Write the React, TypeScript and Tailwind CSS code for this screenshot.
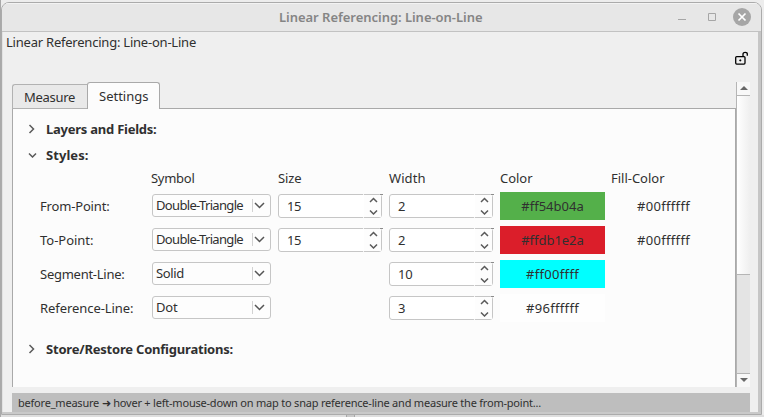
import { useLayoutEffect, useRef, useState } from 'react';

type LabelProps = { text: string; width: number; className?: string };

/** Text run whose tracking is adjusted so that it spans a given width. */
function Label({ text, width, className = '' }: LabelProps) {
  const ref = useRef<HTMLSpanElement>(null);
  const [tracking, setTracking] = useState(0);
  useLayoutEffect(() => {
    if (ref.current) {
      const natural = ref.current.getBoundingClientRect().width - tracking * text.length;
      setTracking((width - natural) / text.length);
    }
  }, [text, width]);
  return (
    <span ref={ref} className={`block w-max whitespace-pre leading-4 ${className}`} style={{ letterSpacing: `${tracking}px` }}>
      {text}
    </span>
  );
}

function Chevron({ dir, className = '' }: { dir: 'up' | 'down' | 'right'; className?: string }) {
  const paths = { up: 'M1 5 4.5 1.5 8 5', down: 'M1 1.5 4.5 5 8 1.5', right: 'M1.5 1 5.5 5 1.5 9' };
  return (
    <svg
      className={`block shrink-0 ${className}`}
      width={dir === 'right' ? 8 : 9}
      height={dir === 'right' ? 10 : 6}
      fill="none"
      stroke="#5a5a5a"
      strokeWidth="1.5"
    >
      <path d={paths[dir]} />
    </svg>
  );
}

function Combo({ text, width }: { text: string; width: number }) {
  return (
    <div className="mt-[2px] flex h-[23px] w-[119px] items-start rounded-[3px] border border-[#c6c6c6] bg-[#fdfdfd] pl-[3px]">
      <Label text={text} width={width} className="mt-[2px]" />
      <div className="ml-auto mt-[4px] flex h-[13px] w-[18px] items-center border-l border-[#d2d2d2] pl-px">
        <svg width="11" height="7" className="block" fill="none" stroke="#555" strokeWidth="1.5">
          <path d="M1 1 5.5 5.5 10 1" />
        </svg>
      </div>
    </div>
  );
}

function Spin({ text, width }: { text: string; width: number }) {
  return (
    <div className="relative mt-[2px] flex h-[24px] w-[104px] rounded-[3px] border border-[#c6c6c6] bg-white pl-[8px]">
      <Label text={text} width={width} className="mt-[3px]" />
      <div className="ml-auto flex w-[17px] flex-col items-end justify-between bg-[#fdfdfd] pb-[2px] pr-[3px] pt-[2px]">
        <Chevron dir="up" />
        <Chevron dir="down" />
      </div>
      <div className="absolute -right-[2px] -top-px h-px w-[3px] bg-[#8c8c8c]" />
      <div className="absolute -top-px left-[84px] h-px w-px bg-[#f4f4f4]" />
      <div className="absolute -bottom-px left-[84px] h-px w-px bg-[#f4f4f4]" />
    </div>
  );
}

function Swatch({ text, width, className }: { text: string; width: number; className: string }) {
  return (
    <div className={`flex h-[28px] w-[105px] justify-center pt-[6px] ${className}`}>
      <Label text={text} width={width} />
    </div>
  );
}

type Row = {
  name: string;
  nameW: number;
  symbol: string;
  symbolW: number;
  size?: string;
  width: string;
  color: string;
  colorW: number;
  colorClass: string;
  fill?: string;
};

const rows: Row[] = [
  { name: 'From-Point:', nameW: 69.5, symbol: 'Double-Triangle', symbolW: 87, size: '15', width: '2', color: '#ff54b04a', colorW: 62.5, colorClass: 'bg-[#54b04a]', fill: '#00ffffff' },
  { name: 'To-Point:', nameW: 53.5, symbol: 'Double-Triangle', symbolW: 87, size: '15', width: '2', color: '#ffdb1e2a', colorW: 62.5, colorClass: 'bg-[#db1e2a]', fill: '#00ffffff' },
  { name: 'Segment-Line:', nameW: 84.5, symbol: 'Solid', symbolW: 28, width: '10', color: '#ff00ffff', colorW: 53, colorClass: 'bg-[#00ffff]' },
  { name: 'Reference-Line:', nameW: 93.5, symbol: 'Dot', symbolW: 21.5, width: '3', color: '#96ffffff', colorW: 53, colorClass: 'bg-[#fefefe]' },
];

const cols = 'grid grid-cols-[112px_126px_111px_111px_111px_105px] pl-[27px]';

function Section({ title, width, open }: { title: string; width: number; open?: boolean }) {
  return (
    <div className="flex h-4 items-center pl-[15px]">
      <div className="flex w-[18px]">
        {open ? <Chevron dir="down" className="-mt-px" /> : <Chevron dir="right" className="-mt-px" />}
      </div>
      <Label text={title} width={width} className="font-bold" />
    </div>
  );
}

export default function App() {
  return (
    <div className="flex h-[417px] w-[764px] flex-col overflow-hidden bg-[linear-gradient(90deg,#a9a9a9_0_1px,#ededed_1px)] pl-px pt-[2px] font-['Noto_Sans','Open_Sans',sans-serif] text-[13px] text-[#303030]">
      <div className="flex h-[413px] w-[761px] shrink-0 flex-col overflow-hidden rounded-t-[8px] border border-[#ababab] bg-[#efefef]">
        <header className="flex h-[29px] shrink-0 border-b border-[#c2c2c2] bg-[#e7e7e7] shadow-[inset_0_1px_0_#f3f3f3]">
          <Label text="Linear Referencing: Line-on-Line" width={203.5} className="ml-[277px] mt-[6px] font-semibold text-[#858585]" />
          <svg className="ml-auto block" width="90" height="28" fill="none" stroke="#a6a6a6">
            <path d="M7 16.5h8M37.5 10.5h7v7h-7z" />
            <circle cx="71" cy="14" r="9" fill="#a6a6a6" stroke="none" />
            <path d="m67.5 10.5 7 7m0-7-7 7" stroke="#fff" strokeWidth="1.7" />
          </svg>
        </header>

        <div className="flex h-[380px] shrink-0 border-l border-r-[3px] border-l-[#e2e2e2] border-r-[#c6c6c6]">
          <div className="flex w-full flex-col pl-[9px]">
            <div className="-ml-[6px] flex h-[50px] shrink-0 justify-between pr-[8px] pt-[2px]">
              <Label text="Linear Referencing: Line-on-Line" width={190} />
              <svg className="mt-[17px] block" width="16" height="16" fill="none" stroke="#000" strokeWidth="1.3">
                <rect x="1.7" y="5.6" width="9.3" height="7.5" rx="1" />
                <path d="M9 5.2V3c0-2.2 4.3-2.2 4.3 0v1.8" />
                <path d="M5.3 9.4h2M6.3 8.4v2" strokeWidth="1" />
              </svg>
            </div>

            <div className="flex h-[305px] w-[738px] shrink-0">
              <div className="flex w-[724px] flex-col">
                <div className="flex h-[27px] shrink-0 items-end">
                  <div className="flex h-[25px] w-[75px] rounded-tl-[3px] border border-r-0 border-[#b2b2b2] bg-[#e9e9e9] pl-[11px] pt-[4px]">
                    <Label text="Measure" width={51} />
                  </div>
                  <div className="flex h-[27px] w-[73px] rounded-t-[3px] border border-b-0 border-[#a9a9a9] bg-[#fcfcfc] pl-[11px] pt-[5px]">
                    <Label text="Settings" width={49.5} />
                  </div>
                  <div className="h-px flex-1 bg-[#a9a9a9]" />
                </div>
                <main className="flex-1 border-x border-[#a9a9a9] bg-[#fcfcfc] pt-[12px]">
                  <Section title="Layers and Fields:" width={110.5} />
                  <div className="h-[10px]" />
                  <Section title="Styles:" width={42.5} open />
                  <div className={`${cols} mt-[7px] h-[22px]`}>
                    <div />
                    <Label text="Symbol" width={43.5} className="-ml-px" />
                    <Label text="Size" width={23.5} />
                    <Label text="Width" width={36.5} />
                    <Label text="Color" width={32.5} />
                    <Label text="Fill-Color" width={53.5} />
                  </div>
                  <div className="flex flex-col gap-[6px]">
                    {rows.map((r) => (
                      <div key={r.name} className={`${cols} h-[28px]`}>
                        <Label text={r.name} width={r.nameW} className="mt-[6px]" />
                        <Combo text={r.symbol} width={r.symbolW} />
                        <div>{r.size && <Spin text={r.size} width={14} />}</div>
                        <Spin text={r.width} width={r.width.length * 7.2} />
                        <Swatch text={r.color} width={r.colorW} className={r.colorClass} />
                        {r.fill && <Swatch text={r.fill} width={53} className="bg-transparent" />}
                      </div>
                    ))}
                  </div>
                  <div className="h-[19px]" />
                  <Section title="Store/Restore Configurations:" width={187} />
                </main>
              </div>

              <div className="flex w-[14px] flex-col border-l border-[#b5b5b5] bg-[#e4e4e4]">
                <div className="flex h-[14px] justify-center border-b border-[#b5b5b5] bg-[#f8f8f8] pt-[4px]">
                  <svg width="8" height="5" className="block" fill="#686868"><path d="M4 0 8 4H0z" /></svg>
                </div>
                <div className="h-[179px] border-b border-[#b5b5b5] bg-gradient-to-r from-white to-[#efefef]" />
                <div className="flex-1" />
                <div className="flex h-[14px] justify-center border-t border-[#b5b5b5] bg-[#f8f8f8] pt-[4px]">
                  <svg width="8" height="5" className="block" fill="#686868"><path d="M4 4 8 0H0z" /></svg>
                </div>
              </div>
            </div>

            <footer className="mt-[6px] h-[19px] w-[738px] shrink-0 bg-[#bebebe] pl-[6px] pt-[2px] text-[11px]">
              <Label text="before_measure ➜ hover + left-mouse-down on map to snap reference-line and measure the from-point..." width={523} />
            </footer>
          </div>
        </div>
        <div className="flex-1 bg-[#c9c9c9]" />
      </div>
      <div className="flex-1 bg-[linear-gradient(90deg,#dedede_0_345px,#a8a8a8_345px_346px,#cacaca_346px_353px,#a8a8a8_353px_354px,#dedede_354px)]" />
    </div>
  );
}
